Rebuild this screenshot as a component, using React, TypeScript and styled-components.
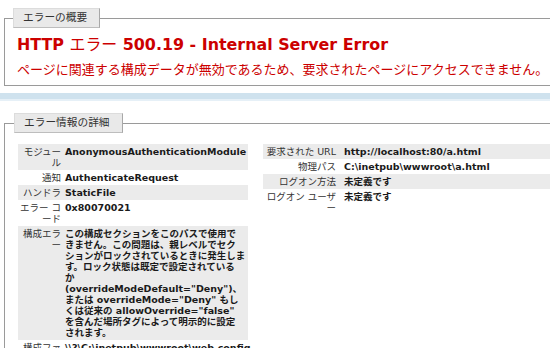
import styled, { createGlobalStyle } from 'styled-components';

const GlobalStyle = createGlobalStyle`
  html, body {
    margin: 0;
    padding: 0;
    background: #fff;
    overflow: hidden;
  }
  body {
    font-family: "DejaVu Sans", "Noto Sans CJK JP", sans-serif;
    color: #222;
  }
`;

const Page = styled.div`
  width: 620px;
  padding-top: 8px;
`;

const Box = styled.fieldset<{ $top?: number; $pad: string }>`
  margin: ${p => p.$top ?? 0}px 0 0 4px;
  padding: ${p => p.$pad};
  border: 1px solid #9a9a9a;
  min-width: 0;
`;

const Legend = styled.legend`
  margin-left: -4px;
  padding: 0 12px 0 9px;
  height: 20px;
  box-sizing: border-box;
  line-height: 18px;
  font-size: 10.7px;
  color: #333;
  background: #e9e9e9;
  border: 1px solid #dcdcdc;
  border-right-color: #a8a8a8;
  border-bottom-color: #bdbdbd;
`;

const Title = styled.h2`
  margin: 0;
  font-size: 15.9px;
  line-height: 22px;
  font-weight: bold;
  color: #cc0000;
  white-space: nowrap;

  span {
    font-weight: normal;
  }
`;

const Message = styled.p`
  margin: 3px 0 0;
  font-size: 13px;
  line-height: 22px;
  color: #cc0000;
  white-space: nowrap;
`;

const Divider = styled.div`
  margin-top: 7px;
  height: 6px;
  background: #cfe2ee;
  border-bottom: 2px solid #e6f0f7;
`;

const Columns = styled.div`
  display: flex;
  gap: 15px;
  align-items: flex-start;
`;

const Table = styled.div<{ $width: number; $label: number; $gap: number }>`
  width: ${p => p.$width}px;
  flex: none;
  --label: ${p => p.$label}px;
  --gap: ${p => p.$gap}px;
`;

const Row = styled.div<{ $alt?: boolean }>`
  display: grid;
  grid-template-columns: var(--label) 1fr;
  background: ${p => (p.$alt ? '#ebebeb' : 'transparent')};
  font-size: 9.5px;
  line-height: 11px;
`;

const Label = styled.div`
  padding: 2px var(--gap) 2px 1px;
  text-align: right;
  color: #333;
  word-break: break-all;
  line-break: anywhere;
`;

const Value = styled.div`
  padding: 2px 0;
  font-weight: bold;
  color: #1a1a1a;
  white-space: nowrap;
`;

const leftRows: [string, string | string[]][] = [
  ['モジュール', 'AnonymousAuthenticationModule'],
  ['通知', 'AuthenticateRequest'],
  ['ハンドラ', 'StaticFile'],
  ['エラー コード', '0x80070021'],
  [
    '構成エラー',
    [
      'この構成セクションをこのパスで使用で',
      'きません。この問題は、親レベルでセク',
      'ションがロックされているときに発生しま',
      'す。ロック状態は既定で設定されている',
      'か',
      '(overrideModeDefault="Deny")、',
      'または overrideMode="Deny" もし',
      'くは従来の allowOverride="false"',
      'を含んだ場所タグによって明示的に設定',
      'されます。',
    ],
  ],
  ['構成ファイル', '\\\\?\\C:\\inetpub\\wwwroot\\web.config'],
];

const rightRows: [string, string][] = [
  ['要求された URL', 'http://localhost:80/a.html'],
  ['物理パス', 'C:\\inetpub\\wwwroot\\a.html'],
  ['ログオン方法', '未定義です'],
  ['ログオン ユーザー', '未定義です'],
];

function renderValue(v: string | string[]) {
  if (typeof v === 'string') return v;
  return v.map((line, i) => (
    <span key={i}>
      {line}
      {i < v.length - 1 && <br />}
    </span>
  ));
}

export default function App() {
  return (
    <Page>
      <GlobalStyle />
      <Box $pad="6px 0 4px 12px">
        <Legend>エラーの概要</Legend>
        <Title>
          HTTP <span>エラー</span> 500.19 - Internal Server Error
        </Title>
        <Message>
          ページに関連する構成データが無効であるため、要求されたページにアクセスできません。
        </Message>
      </Box>
      <Divider />
      <Box $top={12} $pad="11px 0 0 13px">
        <Legend>エラー情報の詳細</Legend>
        <Columns>
          <Table $width={230} $label={47} $gap={4}>
            {leftRows.map(([k, v], i) => (
              <Row key={k} $alt={i % 2 === 0}>
                <Label>{k}</Label>
                <Value>{renderValue(v)}</Value>
              </Row>
            ))}
          </Table>
          <Table $width={330} $label={81} $gap={8}>
            {rightRows.map(([k, v], i) => (
              <Row key={k} $alt={i % 2 === 0}>
                <Label>{k}</Label>
                <Value>{v}</Value>
              </Row>
            ))}
          </Table>
        </Columns>
      </Box>
    </Page>
  );
}
